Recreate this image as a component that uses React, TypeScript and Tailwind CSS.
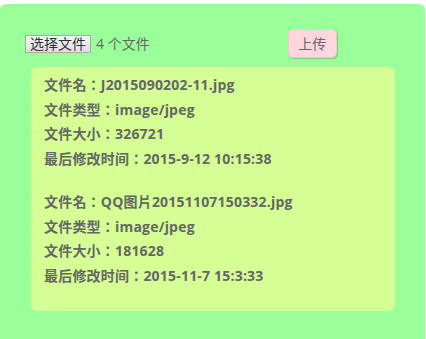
import React from 'react';

interface FileInfo {
  name: string;
  type: string;
  size: number;
  modified: string;
}

const files: FileInfo[] = [
  { name: 'J2015090202-11.jpg', type: 'image/jpeg', size: 326721, modified: '2015-9-12 10:15:38' },
  { name: 'QQ图片20151107150332.jpg', type: 'image/jpeg', size: 181628, modified: '2015-11-7 15:3:33' },
];

const font = { fontFamily: '"Open Sans", "Noto Sans CJK TC", sans-serif' };

export default function App() {
  return (
    <div className="bg-white min-h-[339px] overflow-hidden pt-[4px]" style={font}>
      <div className="w-[425px] min-h-[345px] rounded-[6px] bg-[#99ff99] pt-[25px]">
        {/* Toolbar */}
        <div className="flex h-[29px] items-center">
          <div className="ml-[25px] flex items-center">
            <button className="h-[18px] border border-[#a9a9a9] bg-gradient-to-b from-[#f6f6f6] to-[#dedede] px-[4px] text-[14px] leading-[16px] text-[#333]">
              选择文件
            </button>
            <span className="ml-[5px] text-[14px] text-[#666]">4 个文件</span>
          </div>
          <button className="ml-[138px] h-[29px] w-[49px] rounded-[5px] border border-[#f3c6cd] bg-[#ffd6dd] text-[14px] text-[#666] shadow-[1px_1px_1px_rgba(0,0,0,0.2)]">
            上传
          </button>
        </div>

        {/* File list */}
        <div className="ml-[31px] mt-[9px] h-[244px] w-[364px] rounded-[6px] bg-[#d5ff94] px-[13px] pt-[6px]">
          {files.map((f) => (
            <div key={f.name} className="mb-[19px] text-[14px] font-bold leading-[24.5px] tracking-[0.2px] text-[#666]">
              <p>文件名：{f.name}</p>
              <p>文件类型：{f.type}</p>
              <p>文件大小：{f.size}</p>
              <p>最后修改时间：{f.modified}</p>
            </div>
          ))}
        </div>
      </div>
    </div>
  );
}
